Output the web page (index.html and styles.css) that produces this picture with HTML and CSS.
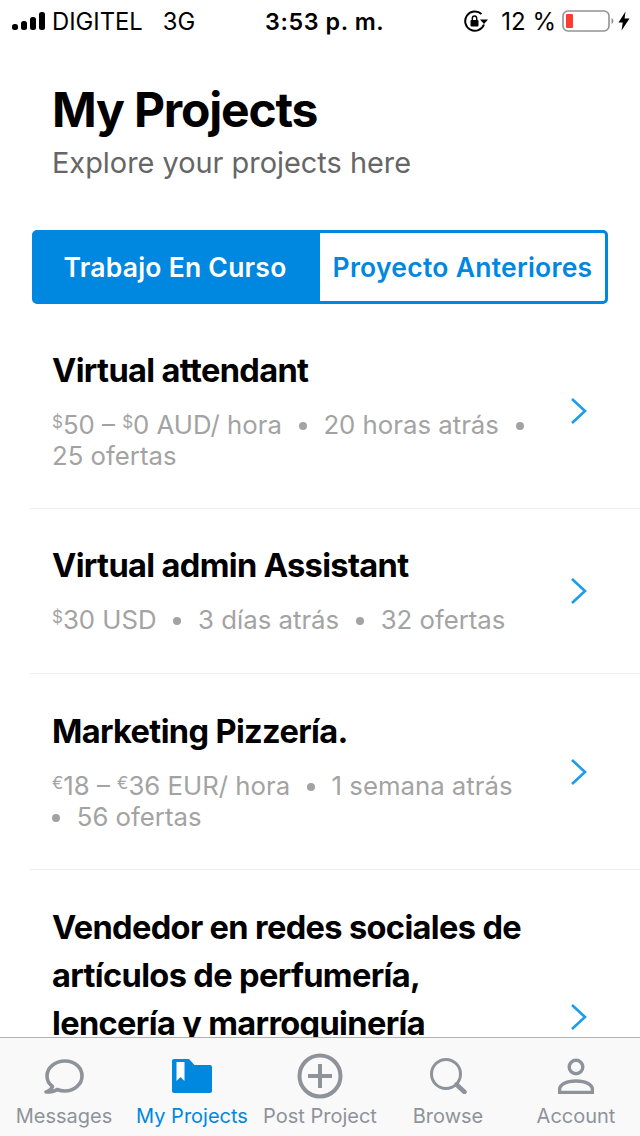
FILE: index.html
```html
<!DOCTYPE html>
<html lang="en">
<head>
    <meta charset="UTF-8">
    <meta name="viewport" content="width=device-width, initial-scale=1.0">
    <title>My Projects</title>
    <link rel="stylesheet" href="styles.css">
</head>
<body>
    <div class="statusbar">
        <div class="status-left">
            <svg class="signal" width="34" height="18" viewBox="0 0 34 18">
                <rect x="0" y="12" width="6" height="6" rx="2.5" fill="#000"/>
                <rect x="9" y="9" width="6" height="9" rx="2.5" fill="#000"/>
                <rect x="18" y="5" width="6" height="13" rx="2.5" fill="#000"/>
                <rect x="27" y="0" width="6" height="18" rx="2.5" fill="#000"/>
            </svg>
            <span class="carrier">DIGITEL</span>
            <span class="network">3G</span>
        </div>
        <div class="status-time">3:53 p. m.</div>
        <div class="status-right">
            <svg width="24" height="22" viewBox="0 0 24 22">
                <path d="M17.500 4A9.700 9.700 0 1 0 20 14.500" fill="none" stroke="#000" stroke-width="2"/>
                <path d="M16 9.500h8l-4 4.500z" fill="#000"/>
                <rect x="6.500" y="10" width="8" height="6.500" rx="1" fill="#000"/>
                <path d="M8.300 10V8.200a2.200 2.200 0 0 1 4.400 0V10" fill="none" stroke="#000" stroke-width="1.400"/>
            </svg>
            <span class="battery-text">12 %</span>
            <svg width="52" height="22" viewBox="0 0 52 22">
                <rect x="1" y="1" width="46" height="20" rx="5" fill="none" stroke="#929292" stroke-width="1.6"/>
                <rect x="4" y="4" width="7" height="14" rx="1" fill="#ff3b30"/>
                <path d="M49.500 8q2 1 2 3t-2 3z" fill="#929292"/>
            </svg>
            <svg width="12" height="20" viewBox="0 0 12 20">
                <path d="M7.500 0.500 0.500 11.500h4.200L3.600 19.500 11.500 7.500H6.600z" fill="#000"/>
            </svg>
        </div>
    </div>

    <div class="header">
        <h1>My Projects</h1>
        <p>Explore your projects here</p>
    </div>

    <div class="tabs">
        <div class="tab active">Trabajo En Curso</div>
        <div class="tab">Proyecto Anteriores</div>
    </div>

    <div class="list">
        <div class="project first">
            <div class="info">
                <h2>Virtual attendant</h2>
                <p><sup>$</sup>50 – <sup>$</sup>0 AUD/ hora <i></i> 20 horas atrás <i></i><br>25 ofertas</p>
            </div>
            <svg class="chevron" width="18" height="28" viewBox="0 0 18 28"><path d="M2 2l13 12L2 26" fill="none" stroke="#1b9cec" stroke-width="2.6"/></svg>
        </div>
        <div class="project second">
            <div class="info">
                <h2>Virtual admin Assistant</h2>
                <p><sup>$</sup>30 USD <i></i> 3 días atrás <i></i> 32 ofertas</p>
            </div>
            <svg class="chevron" width="18" height="28" viewBox="0 0 18 28"><path d="M2 2l13 12L2 26" fill="none" stroke="#1b9cec" stroke-width="2.6"/></svg>
        </div>
        <div class="project third">
            <div class="info">
                <h2>Marketing Pizzería.</h2>
                <p><sup>€</sup>18 – <sup>€</sup>36 EUR/ hora <i></i> 1 semana atrás<br><i class="lead"></i> 56 ofertas</p>
            </div>
            <svg class="chevron" width="18" height="28" viewBox="0 0 18 28"><path d="M2 2l13 12L2 26" fill="none" stroke="#1b9cec" stroke-width="2.6"/></svg>
        </div>
        <div class="project fourth">
            <div class="info">
                <h2>Vendedor en redes sociales de<br>artículos de perfumería,<br>lencería y marroquinería</h2>
            </div>
            <svg class="chevron" width="18" height="28" viewBox="0 0 18 28"><path d="M2 2l13 12L2 26" fill="none" stroke="#1b9cec" stroke-width="2.6"/></svg>
        </div>
    </div>

    <div class="tabbar">
        <div class="tabbar-item">
            <div class="tabbar-icon">
                <svg width="40" height="35" viewBox="0 0 40 35">
                    <path d="M2 33c3-1 5.500-3 6.500-5.500C4.500 24.500 3 21 3 17 3 8.500 11 2 21 2s17 6.500 17 15-8 15-17 15c-3 0-5.500-.5-8-1.500-2 1.500-5 2.500-11 2.500z" fill="none" stroke="#8e939b" stroke-width="3.600" stroke-linejoin="round"/>
                </svg>
            </div>
            <span>Messages</span>
        </div>
        <div class="tabbar-item active">
            <div class="tabbar-icon">
                <svg width="40" height="34" viewBox="0 0 40 34">
                    <path d="M0 2Q0 0 2 0H17l5.500 6H38q2 0 2 2v24q0 2-2 2H2q-2 0-2-2z" fill="#0087e0"/>
                    <path d="M4.500 3h8v19l-4-4-4 4z" fill="#fff"/>
                </svg>
            </div>
            <span>My Projects</span>
        </div>
        <div class="tabbar-item">
            <div class="tabbar-icon">
                <svg width="46" height="46" viewBox="0 0 46 46">
                    <circle cx="23" cy="23" r="20.500" fill="none" stroke="#8e939b" stroke-width="4"/>
                    <path d="M23 11v24M11 23h24" fill="none" stroke="#8e939b" stroke-width="4"/>
                </svg>
            </div>
            <span>Post Project</span>
        </div>
        <div class="tabbar-item">
            <div class="tabbar-icon">
                <svg width="37" height="36" viewBox="0 0 37 36">
                    <circle cx="16" cy="16" r="14.500" fill="none" stroke="#8e939b" stroke-width="3"/>
                    <path d="M26.500 26.500l8 7.500" fill="none" stroke="#8e939b" stroke-width="4.500" stroke-linecap="round"/>
                </svg>
            </div>
            <span>Browse</span>
        </div>
        <div class="tabbar-item">
            <div class="tabbar-icon">
                <svg width="36" height="36" viewBox="0 0 36 36">
                    <circle cx="18" cy="9" r="6.800" fill="none" stroke="#8e939b" stroke-width="3.400"/>
                    <path d="M1.500 34.500V32c0-5.500 6.500-9 16.500-9s16.500 3.500 16.500 9v2.500z" fill="none" stroke="#8e939b" stroke-width="3.400"/>
                </svg>
            </div>
            <span>Account</span>
        </div>
    </div>
</body>
</html>
```

FILE: styles.css
```css
*{
    margin: 0;
    padding: 0;
    box-sizing: border-box;
    font-family: 'Inter', 'Liberation Sans', sans-serif;
}
body{
    width: 640px;
    height: 1136px;
    display: flex;
    flex-direction: column;
    overflow: hidden;
    background: #fff;
}
.statusbar{
    height: 40px;
    flex: none;
    display: flex;
    align-items: center;
    padding: 2px 10px 0 12px;
    color: #000;
}
.status-left{
    display: flex;
    align-items: center;
    width: 253px;
}
.carrier{
    margin-left: 6px;
    font-size: 23.800px;
}
.network{
    margin-left: 20px;
    font-size: 23.800px;
}
.status-time{
    font-weight: 600;
    font-size: 23.300px;
    letter-spacing: 0.6px;
}
.status-right{
    margin-left: auto;
    display: flex;
    align-items: center;
    gap: 4px;
}
.battery-text{
    margin: 0 2px 0 9px;
    font-size: 24px;
}
.header{
    flex: none;
    padding: 42px 52px 0;
    height: 190px;
}
.header h1{
    font-size: 48px;
    line-height: 56px;
    font-weight: 700;
    letter-spacing: -1.200px;
    color: #000;
}
.header p{
    font-size: 28.900px;
    line-height: 36px;
    margin-top: 7px;
    color: #666;
}
.tabs{
    flex: none;
    margin: 0 32px;
    height: 74px;
    display: flex;
    border: 3px solid #0087e0;
    border-radius: 5px;
}
.tab{
    flex: 1;
    display: flex;
    align-items: center;
    justify-content: center;
    font-size: 26.500px;
    font-weight: 600;
    color: #0087e0;
    letter-spacing: 0.25px;
    white-space: nowrap;
}
.tab.active{
    flex: none;
    width: 285px;
    padding-right: 5px;
    background: #0087e0;
    color: #fff;
}
.list{
    flex: 1;
    min-height: 0;
    overflow: hidden;
}
.project{
    display: flex;
    align-items: center;
    justify-content: space-between;
    margin-left: 30px;
    padding: 0 52px 0 22px;
    border-bottom: 1px solid #eee;
}
.project.first{
    height: 205px;
    padding-top: 10px;
}
.project.second{
    height: 165px;
}
.project.third{
    height: 196px;
}
.project.fourth{
    height: 294px;
    border-bottom: none;
}
.info{
    width: 490px;
}
.project.first .info{
    margin-top: -6px;
}
.project.second .info{
    margin-top: -6px;
}
.project.third .info{
    margin-top: -4px;
}
.project.fourth .info{
    margin-bottom: 84px;
}
.info h2{
    font-size: 32.600px;
    line-height: 48px;
    font-weight: 700;
    letter-spacing: -0.650px;
    color: #000;
}
.info p{
    margin-top: 15px;
    font-size: 25.750px;
    line-height: 31px;
    color: #a3a3a3;
}
.info p sup{
    font-size: 17px;
    line-height: 0;
    vertical-align: 6px;
}
.info p i{
    display: inline-block;
    width: 8px;
    height: 8px;
    margin: 0 9.500px;
    border-radius: 50%;
    background: #a3a3a3;
    vertical-align: 4px;
}
.info p i.lead{
    margin-left: 0;
}
.chevron{
    flex: none;
}
.tabbar{
    flex: none;
    height: 99px;
    display: grid;
    grid-template-columns: repeat(5, 128px);
    background: #f9f9f9;
    border-top: 1px solid #b2b2b2;
}
.tabbar-item{
    display: flex;
    flex-direction: column;
    align-items: center;
    padding-top: 15px;
    color: #8e939b;
    font-size: 20px;
}
.tabbar-icon{
    height: 46px;
    display: flex;
    align-items: center;
    justify-content: center;
}
.tabbar-item span{
    margin-top: 5px;
    line-height: 24px;
    white-space: nowrap;
}
.tabbar-item.active{
    color: #0087e0;
}
```
